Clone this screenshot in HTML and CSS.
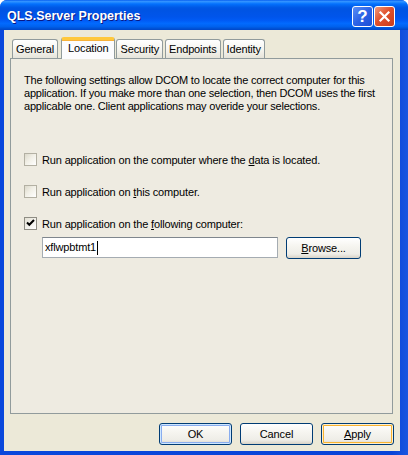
FILE: index.html
```html
<!DOCTYPE html>
<html>
<head>
<meta charset="utf-8">
<link rel="stylesheet" href="styles.css">
</head>
<body>
<div class="window">
  <div class="titlebar">
    <span class="title">QLS.Server Properties</span>
    <div class="caption-btns">
      <span class="cap-btn cap-help">?</span>
      <span class="cap-btn cap-close">
        <svg width="13" height="13" viewBox="0 0 13 13"><path d="M2.5 2.5 L10.5 10.5 M10.5 2.5 L2.5 10.5" stroke="#fff" stroke-width="2.2" stroke-linecap="square"/></svg>
      </span>
    </div>
  </div>
  <div class="client">
    <div class="tabs">
      <span class="tab">General</span>
      <span class="tab tab-active">Location</span>
      <span class="tab">Security</span>
      <span class="tab">Endpoints</span>
      <span class="tab">Identity</span>
    </div>
    <div class="panel">
      <p class="intro">The following settings allow DCOM to locate the correct computer for this application. If you make more than one selection, then DCOM uses the first applicable one. Client applications may overide your selections.</p>
      <div class="check-row">
        <span class="checkbox"></span>
        <span>Run application on the computer where the <u>d</u>ata is located.</span>
      </div>
      <div class="check-row">
        <span class="checkbox"></span>
        <span>Run application on <u>t</u>his computer.</span>
      </div>
      <div class="check-row">
        <span class="checkbox checked"><svg width="11" height="11" viewBox="0 0 11 11"><path d="M2 4.5 L4.3 6.8 L9 2" fill="none" stroke="#000" stroke-width="2"/></svg></span>
        <span>Run application on the <u>f</u>ollowing computer:</span>
      </div>
      <div class="field-row">
        <div class="textbox">xflwpbtmt1<span class="caret"></span></div>
        <span class="btn"><u>B</u>rowse...</span>
      </div>
    </div>
    <div class="actions">
      <span class="btn btn-default">OK</span>
      <span class="btn">Cancel</span>
      <span class="btn btn-hot"><u>A</u>pply</span>
    </div>
  </div>
</div>
</body>
</html>
```

FILE: styles.css
```css
* { box-sizing: border-box; }
html, body { margin: 0; padding: 0; background: #ffffff; }
body { font-family: "Liberation Sans", Arial, sans-serif; font-size: 11px; color: #000; letter-spacing: -0.15px; }

.window {
  width: 408px;
  height: 455px;
  display: flex;
  flex-direction: column;
  background: linear-gradient(to right, #0a48dc 0%, #0843d8 96%, #1a56e0 100%);
  border-radius: 7px 7px 0 0;
  overflow: hidden;
}

.titlebar {
  height: 30px;
  flex: none;
  display: flex;
  align-items: center;
  justify-content: space-between;
  padding: 0 13px 0 7px;
  background: linear-gradient(to bottom, #0058ee 0%, #3593ff 4%, #288eff 7%, #127dff 10%, #036ffc 14%, #0262ee 20%, #0057e5 26%, #0054e3 32%, #0055eb 56%, #005bf5 68%, #026afe 78%, #0062ef 88%, #0052d6 95%, #0046c8 100%);
}
.title {
  color: #fff;
  font-weight: bold;
  font-size: 12.5px;
  letter-spacing: 0;
  text-shadow: 1px 1px 0 #0a1883;
  padding-top: 1px;
}
.caption-btns { display: flex; gap: 1px; padding-top: 3px; }
.cap-btn {
  width: 21px;
  height: 21px;
  border: 1px solid #fff;
  border-radius: 3px;
  display: flex;
  align-items: center;
  justify-content: center;
  color: #fff;
}
.cap-help {
  background: linear-gradient(135deg, #5b8ff5 0%, #2d63e6 50%, #1d4fd6 100%);
  font-size: 17px;
  font-weight: bold;
  letter-spacing: 0;
}
.cap-close {
  background: linear-gradient(135deg, #f09a7c 0%, #e0512d 45%, #c93c1a 100%);
}

.client {
  flex: 1;
  margin: 0 8px 4px 4px;
  background: #ece9d8;
  padding: 6px 6px 0 6px;
  display: flex;
  flex-direction: column;
}

.tabs {
  display: flex;
  align-items: flex-end;
  padding-left: 2px;
  height: 22px;
  position: relative;
  z-index: 1;
}
.tab {
  height: 19px;
  padding: 3px 3px 0 3px;
  margin-right: 2px;
  border: 1px solid #919b9c;
  border-bottom: none;
  border-radius: 3px 3px 0 0;
  background: linear-gradient(#ffffff, #f3f2ec 60%, #e6e4da);
}
.tab-active {
  height: 22px;
  padding: 2px 6px 0 6px;
  margin: 0 1px -1px 1px;
  background: #fcfcfe;
  border-top: 3px solid #ffc83c;
  box-shadow: inset 0 1px 0 #f7b23c;
}

.panel {
  height: 356px;
  flex: none;
  border: 1px solid #919b9c;
  background: #eeebe1;
  padding: 15px 12px 0 13px;
  margin-right: 1px;
}
.intro { margin: 0; line-height: 13px; width: 352px; letter-spacing: -0.2px; }

.check-row {
  display: flex;
  align-items: center;
  gap: 5px;
  height: 13px;
  margin-top: 19px;
}
.intro + .check-row { margin-top: 40px; }
.checkbox {
  width: 13px;
  height: 13px;
  flex: none;
  border: 1px solid #b3b0a3;
  background: linear-gradient(135deg, #dcd9cb 0%, #f1efe6 45%, #ffffff 100%);
  display: flex;
  align-items: center;
  justify-content: center;
}
.checkbox.checked { border-color: #8f8d84; background: linear-gradient(135deg, #e4e1d4, #ffffff); }

.field-row {
  display: flex;
  gap: 8px;
  margin: 7px 0 0 18px;
}
.textbox {
  width: 236px;
  height: 21px;
  border: 1px solid #a5acb2;
  border-top-color: #7f868d;
  background: #fff;
  padding: 3px 2px 0;
  display: flex;
  align-items: flex-start;
}
.caret { width: 1px; height: 14px; background: #000; margin-left: 1px; }

.btn {
  width: 75px;
  height: 22px;
  border: 1px solid #003c74;
  border-radius: 3px;
  background: linear-gradient(#ffffff 0%, #f6f5f0 40%, #eeede7 80%, #d8d3c7 100%);
  display: flex;
  align-items: center;
  justify-content: center;
  font-size: 11px;
}
.btn-default { box-shadow: inset 0 0 0 1px #cee7ff, inset 0 0 0 2px #89adef; }
.btn-hot { box-shadow: inset 0 0 0 1px #fff0cf, inset 0 0 0 2px #f8b330; }

.actions {
  display: flex;
  justify-content: flex-end;
  gap: 8px;
  margin-top: 9px;
}
.actions .btn { width: 73px; }
```
